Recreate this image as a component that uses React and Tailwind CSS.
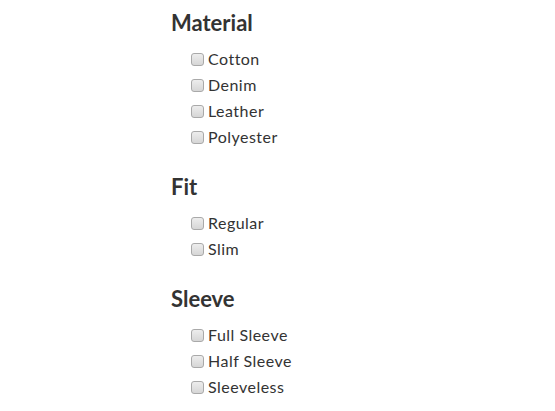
import React from "react";

const FILTERS = [
  { title: "Material", options: ["Cotton", "Denim", "Leather", "Polyester"] },
  { title: "Fit", options: ["Regular", "Slim"] },
  { title: "Sleeve", options: ["Full Sleeve", "Half Sleeve", "Sleeveless"] },
];

function FilterGroup({ title, options }) {
  return (
    <div className="mt-[11px] [&+&]:mt-[25px]">
      <h4 className="h-[24px] text-[22px] font-bold leading-[24px] text-[#333]">{title}</h4>
      <ul className="mt-[11px] pl-[20px]">
        {options.map((opt) => (
          <li key={opt} className="flex h-[26px] items-center">
            <label className="flex items-center text-[16px] tracking-[0.03em] text-[#333]">
              <input
                type="checkbox"
                className="m-0 mr-[4px] h-[13px] w-[13px] appearance-none rounded-[3px] border border-[#a9a9a9] bg-gradient-to-b from-[#ededed] to-[#d6d6d6]"
              />
              {opt}
            </label>
          </li>
        ))}
      </ul>
    </div>
  );
}

export default function App() {
  return (
    <div className="min-h-[411px] w-[555px] bg-white font-['Lato','Noto_Sans',sans-serif]">
      <div className="ml-[171px] flex flex-col pb-4">
        {FILTERS.map((f) => (
          <FilterGroup key={f.title} {...f} />
        ))}
      </div>
    </div>
  );
}
